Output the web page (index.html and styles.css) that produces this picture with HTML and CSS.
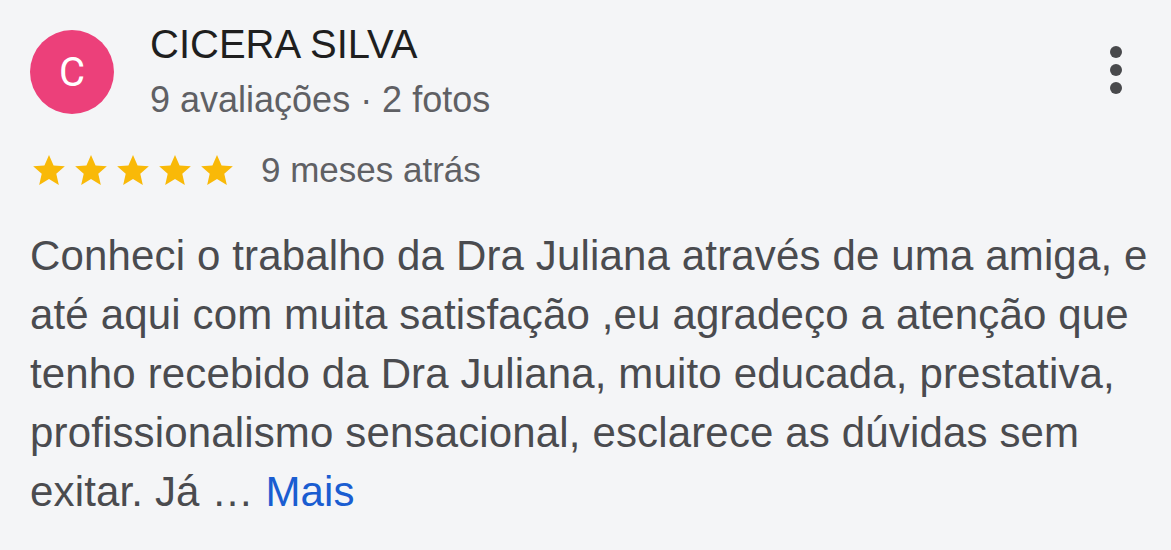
FILE: index.html
```html
<!DOCTYPE html>
<html lang="pt-BR">
<head>
  <meta charset="UTF-8" />
  <title>Avaliação</title>
  <link rel="stylesheet" href="styles.css">
</head>
<body>
  <div class="review">
    <div class="header">
      <div class="avatar">C</div>
      <div class="author">
        <div class="name">CICERA SILVA</div>
        <div class="meta">9 avaliações · 2 fotos</div>
      </div>
      <div class="menu">
        <span></span><span></span><span></span>
      </div>
    </div>
    <div class="rating">
      <div class="stars">
        <svg viewBox="0 0 24 24"><path d="M12 2.5l2.9 6.6 7.1.6-5.4 4.7 1.6 7-6.2-3.7-6.2 3.7 1.6-7L2 9.7l7.1-.6z"/></svg>
        <svg viewBox="0 0 24 24"><path d="M12 2.5l2.9 6.6 7.1.6-5.4 4.7 1.6 7-6.2-3.7-6.2 3.7 1.6-7L2 9.7l7.1-.6z"/></svg>
        <svg viewBox="0 0 24 24"><path d="M12 2.5l2.9 6.6 7.1.6-5.4 4.7 1.6 7-6.2-3.7-6.2 3.7 1.6-7L2 9.7l7.1-.6z"/></svg>
        <svg viewBox="0 0 24 24"><path d="M12 2.5l2.9 6.6 7.1.6-5.4 4.7 1.6 7-6.2-3.7-6.2 3.7 1.6-7L2 9.7l7.1-.6z"/></svg>
        <svg viewBox="0 0 24 24"><path d="M12 2.5l2.9 6.6 7.1.6-5.4 4.7 1.6 7-6.2-3.7-6.2 3.7 1.6-7L2 9.7l7.1-.6z"/></svg>
      </div>
      <span class="date">9 meses atrás</span>
    </div>
    <p class="text">Conheci o trabalho da Dra Juliana através de uma amiga, e até aqui com muita satisfação ,eu agradeço a atenção que tenho recebido da Dra Juliana, muito educada, prestativa, profissionalismo sensacional, esclarece as dúvidas sem exitar. Já … <a href="#" class="more">Mais</a></p>
  </div>
</body>
</html>
```

FILE: styles.css
```css
html, body {
  margin: 0;
  background: #f4f5f7;
}
body {
  font-family: "Liberation Sans", Arial, sans-serif;
  width: 1171px;
  height: 550px;
  overflow: hidden;
}
.review {
  padding: 22px 10px 0 30px;
}
.header {
  display: flex;
  align-items: flex-start;
}
.avatar {
  width: 84px;
  height: 84px;
  border-radius: 50%;
  background: #ec407a;
  color: #fff;
  font-family: Roboto, sans-serif;
  font-size: 40px;
  display: flex;
  align-items: center;
  justify-content: center;
  margin-top: 8px;
  flex-shrink: 0;
}
.author {
  margin-left: 36px;
  flex: 1;
}
.name {
  font-size: 40px;
  color: #1f1f1f;
  line-height: 44px;
}
.meta {
  font-size: 36px;
  color: #5f6064;
  line-height: 40px;
  margin-top: 14px;
}
.menu {
  display: flex;
  flex-direction: column;
  gap: 6px;
  margin: 24px 39px 0 0;
}
.menu span {
  width: 12px;
  height: 12px;
  border-radius: 50%;
  background: #48494c;
}
.rating {
  display: flex;
  align-items: center;
  margin-top: 30px;
}
.stars {
  display: flex;
  gap: 4px;
}
.stars svg {
  width: 38px;
  height: 38px;
  fill: #f9b908;
}
.date {
  font-size: 35px;
  color: #5f6064;
  margin-left: 25px;
}
.text {
  margin: 36px 0 0 0;
  font-size: 42px;
  line-height: 59px;
  letter-spacing: 0.15px;
  color: #4a4b4f;
}
.more {
  color: #1a5dd1;
  text-decoration: none;
}
```
